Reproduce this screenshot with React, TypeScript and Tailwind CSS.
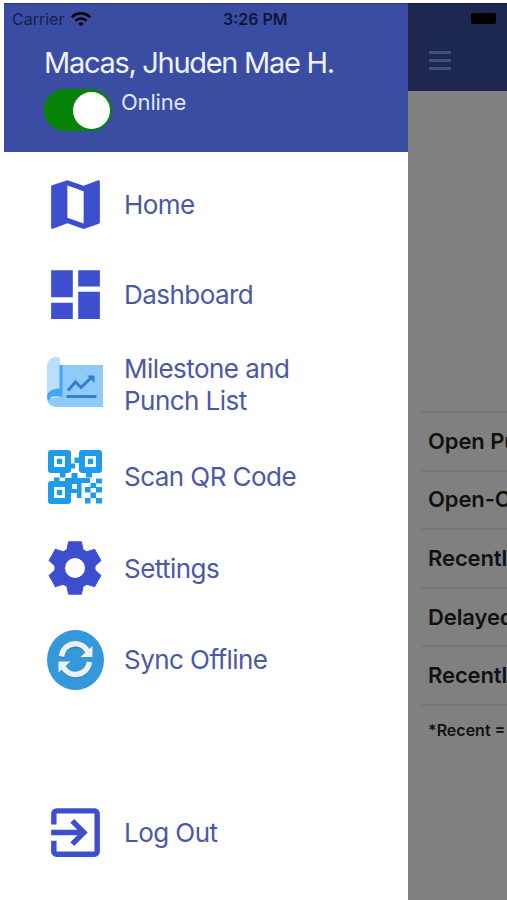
import React from "react";
import { MdDashboard, MdExitToApp, MdMap, MdWifi } from "react-icons/md";

type MenuItemProps = {
  label: React.ReactNode;
  icon: React.ReactNode;
  className: string;
};

const MilestoneIcon = () => (
  <svg viewBox="0 0 56 50" className="w-14 h-[50px] mb-1.5 mr-0.5">
    <path d="M12 8h44v42H8l4-8z" fill="#90caf9" />
    <path d="M0 41V9C0 4 4 0 9 0h1.5C12 0 13 1 13 2.500V32C6 32 0 35 0 41z" fill="#bbdefb" />
    <path d="M0 41c0 5 4 9 9.500 9H14V40z" fill="#90caf9" />
    <path d="M12.500 8H15.500v31.500H7c-3 0-4.500 1.500-4.500 4C1 43 0 42 0 40c0-5 5-8.500 12.500-8.500z" fill="#42a5f5" />
    <path d="M21 33.500l7.500-8.500 5.500 5.500L45 20" fill="none" stroke="#2f7fd0" strokeWidth="3" />
    <path d="M40 18.500h7.500V26z" fill="#2f7fd0" />
    <path d="M19.500 39.500h30" stroke="#2f7fd0" strokeWidth="3" />
  </svg>
);

const QrEye = ({ x, y }: { x: number; y: number }) => (
  <g transform={`translate(${x} ${y})`}>
    <rect x="3" y="3" width="17" height="17" fill="none" stroke="#1e9cec" strokeWidth="6" strokeLinejoin="round" />
    <rect x="8.800" y="8.800" width="5.400" height="5.400" rx="1" fill="#1e9cec" />
  </g>
);

const QrIcon = () => (
  <svg viewBox="0 0 54 54" className="size-[54px] mr-px">
    <QrEye x={0} y={0} />
    <QrEye x={31} y={0} />
    <QrEye x={0} y={31} />
    <path
      d="M22 13.500h5v5h-5zM26.500 7.500H32v5.500h-5.500zM12 22h5.500v5.500H12zM6 27.500h5.500V32H6zM23.500 23h6v5H42v5h-8.500v15H29v-5h-7V33h-5v-5h6.500zM38 22h6v5.500h-6z"
      fill="#1e9cec"
    />
    <path
      d="M48 28.500h6v5h-6zM42.500 33h5.500v5h-5.500zM37 37h5.500v5.500H37zM48 37h6v5.500h-6zM42.500 42.500h5.500V48h-5.500zM37 48h5.500v5.500H37zM48 48h6v5.500h-6z"
      fill="#1e9cec"
    />
    <rect x="24" y="34" width="5" height="5" fill="#fff" />
  </svg>
);

const GearIcon = () => (
  <svg viewBox="-27 -27 54 54" className="size-[54px] mr-[2px] mb-[2px]" fill="currentColor">
    <circle r="15.300" fill="none" stroke="currentColor" strokeWidth="10.600" />
    {[0, 60, 120, 180, 240, 300].map((deg) => (
      <path
        key={deg}
        d="M-6.400-26.200H6.400L8-19 5-14H-5L-8-19z"
        stroke="currentColor"
        strokeLinejoin="round"
        transform={`rotate(${deg})`}
      />
    ))}
  </svg>
);

const SyncIcon = () => (
  <svg viewBox="0 0 57 60" className="w-[57px] h-[60px]">
    <ellipse cx="28.500" cy="30" rx="28.500" ry="30" fill="#3498db" />
    <path
      d="M14.500 28C17 12.500 35 11.500 41 23M42.500 33.500C40 48 22 48.500 16 38"
      fill="none"
      stroke="#2980b9"
      strokeWidth="5.500"
    />
    <path
      d="M14.500 26.500C17 11 35 10 41 22M42.500 32C40 47 22 48 16 37"
      fill="none"
      stroke="#ecf0f1"
      strokeWidth="5.500"
    />
    <path d="M45.500 16v11H33.500zM11.500 42.500V31.500H23.500z" fill="#ecf0f1" />
  </svg>
);

const MenuItem = ({ label, icon, className }: MenuItemProps) => (
  <div className={`flex items-center pl-[39px] ${className}`}>
    <div className="w-[65px] mr-4 flex justify-center text-[#3d4fcf]">{icon}</div>
    <span className="text-[26px] leading-8 tracking-[-0.55px] text-[#4a58a8] whitespace-nowrap">{label}</span>
  </div>
);

const rows = ["Open Punch", "Open-Critical", "Recently Added", "Delayed", "Recently Closed"];

const App = () => {
  return (
    <div className="w-[507px] h-[900px] overflow-hidden flex bg-white font-['Inter',sans-serif] pl-1 pt-[3px]">
      <div className="w-[404px] shrink-0 flex flex-col">
        <div className="h-[149px] bg-[#3a4da2] border-t border-[#303c70]">
          <div className="h-[29px] flex items-center pl-2 text-[#14204f]">
            <span className="text-[16px] w-[58px]">Carrier</span>
            <MdWifi className="size-[22px] text-black" />
            <span className="ml-[131px] text-[16px] font-semibold text-[#0d1639] whitespace-nowrap">3:26 PM</span>
          </div>
          <div className="pl-10 mt-3 text-[29px] leading-9 tracking-[-1.3px] text-[#eef2ff] whitespace-nowrap">
            Macas, Jhuden Mae H.
          </div>
          <div className="flex pl-10 mt-2">
            <div className="w-[68px] h-[42px] rounded-full bg-[#078407] flex items-center justify-end pr-0.5">
              <div className="size-[37px] rounded-full bg-white" />
            </div>
            <span className="ml-[9px] -mt-px text-[22px] leading-7 tracking-[-0.2px] text-[#dfe6ff]">Online</span>
          </div>
        </div>
        <div className="pt-[7px]">
          <MenuItem label="Home" icon={<MdMap className="size-[65px]" />} className="h-[91px]" />
          <MenuItem label="Dashboard" icon={<MdDashboard className="size-[65px]" />} className="h-[89px]" />
          <MenuItem
            label={<>Milestone and<br />Punch List</>}
            icon={<MilestoneIcon />}
            className="h-[92px]"
          />
          <MenuItem label="Scan QR Code" icon={<QrIcon />} className="h-[92px]" />
          <MenuItem label="Settings" icon={<GearIcon />} className="h-[91px]" />
          <MenuItem label="Sync Offline" icon={<SyncIcon />} className="h-[91px]" />
          <MenuItem label="Log Out" icon={<MdExitToApp className="size-[65px]" />} className="h-[91px] mt-[82px]" />
        </div>
      </div>
      {/* dimmed page behind the drawer */}
      <div className="flex-1 min-w-0 overflow-hidden bg-[#808080]">
        <div className="h-[88px] bg-[#1d2750] border-t border-[#161b30]">
          <div className="h-[29px] flex items-center justify-end pr-[11px]">
            <div className="w-[25px] h-[11px] rounded-xs bg-black" />
          </div>
          <div className="flex flex-col gap-[5px] pl-[21px] pt-[18px]">
            <div className="w-[22px] h-[3px] bg-[#454e74]" />
            <div className="w-[22px] h-[3px] bg-[#454e74]" />
            <div className="w-[22px] h-[3px] bg-[#454e74]" />
          </div>
        </div>
        <div className="mt-[320px] ml-3.5">
          {rows.map((row) => (
            <div
              key={row}
              className="h-[58.600px] border-t-2 border-[#747474] pl-1.5 flex items-center text-[22px] tracking-[-0.1px] font-semibold text-[#111] whitespace-nowrap"
            >
              {row}
            </div>
          ))}
          <div className="border-t-2 border-[#747474] pl-1.5 pt-3 text-[16px] font-semibold text-[#111] whitespace-nowrap">
            *Recent = 7 days
          </div>
        </div>
      </div>
    </div>
  );
};

export default App;
